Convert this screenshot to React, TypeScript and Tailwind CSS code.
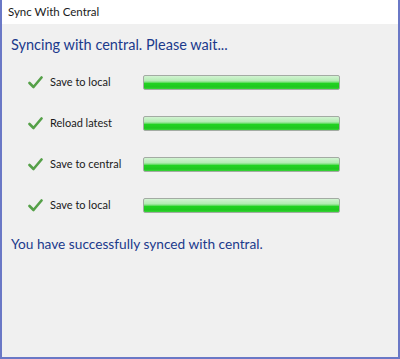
const steps = ["Save to local", "Reload latest", "Save to central", "Save to local"];

const Check = () => (
  <svg width="15" height="13" viewBox="0 0 15 13" className="shrink-0">
    <path d="M1.5 7 L5.5 11 L13.5 1.5" fill="none" stroke="#55a048" strokeWidth="2.6" strokeLinecap="round" strokeLinejoin="round" />
  </svg>
);

const Bar = () => (
  <div className="h-[15px] w-[197px] rounded-[2px] border border-[#a3aba3] bg-[linear-gradient(to_bottom,#d2f3d2_0%,#b4ecb4_35%,#7ce07c_48%,#22d322_55%,#1ec81e_85%,#3ad43a_100%)]" />
);

export default function App() {
  return (
    <div className="flex h-[359px] w-[400px] flex-col border-x-2 border-b-2 border-[#6a78c6] bg-[#f0f0f0] font-['Lato','Noto_Sans',sans-serif]">
      <div className="flex h-[24px] items-center bg-white px-[6px] text-[11.5px] text-[#1a1a1a]">Sync With Central</div>
      <div className="pl-[9px] pt-[10px] text-[14.5px] leading-[22px] text-[#1b3a8c]">Syncing with central. Please wait...</div>
      <div className="mt-[19px] flex flex-col gap-[26px]">
        {steps.map((s, i) => (
          <div key={i} className="flex h-[15px] items-center">
            <div className="ml-[26px] w-[22px]">
              <Check />
            </div>
            <span className="w-[93px] text-[11px] text-[#1a1a1a]">{s}</span>
            <Bar />
          </div>
        ))}
      </div>
      <div className="mt-[20px] pl-[9px] text-[13.7px] leading-[22px] text-[#1b3a8c]">You have successfully synced with central.</div>
    </div>
  );
}
